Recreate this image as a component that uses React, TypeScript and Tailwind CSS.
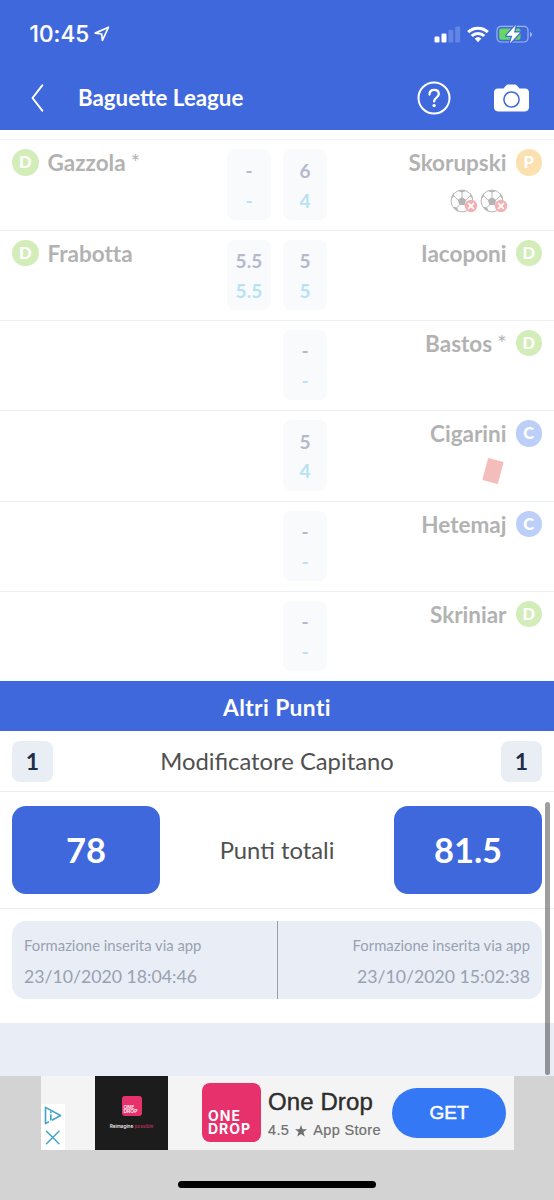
import type { ReactNode } from "react";

type Role = "D" | "P" | "C";
type Player = { name: string; starred?: boolean; role: Role; vote: string; total: string; extra?: "goals" | "red" };
type Match = { home?: Player; away: Player };

const matches: Match[] = [
  {
    home: { name: "Gazzola", starred: true, role: "D", vote: "-", total: "-" },
    away: { name: "Skorupski", role: "P", vote: "6", total: "4", extra: "goals" },
  },
  {
    home: { name: "Frabotta", role: "D", vote: "5.5", total: "5.5" },
    away: { name: "Iacoponi", role: "D", vote: "5", total: "5" },
  },
  { away: { name: "Bastos", starred: true, role: "D", vote: "-", total: "-" } },
  { away: { name: "Cigarini", role: "C", vote: "5", total: "4", extra: "red" } },
  { away: { name: "Hetemaj", role: "C", vote: "-", total: "-" } },
  { away: { name: "Skriniar", role: "D", vote: "-", total: "-" } },
];

const roleColors: Record<Role, string> = {
  D: "bg-[#d3edb9]",
  P: "bg-[#fbe0b0]",
  C: "bg-[#bccff8]",
};

function RoleBadge({ role }: { role: Role }) {
  return (
    <span
      className={`flex size-[26.5px] shrink-0 items-center justify-center rounded-full text-[16.5px] leading-none font-black text-white ${roleColors[role]}`}
    >
      {role}
    </span>
  );
}

function ScorePill({ player }: { player: Player }) {
  return (
    <div className="flex h-[70.5px] w-[44px] flex-col items-center rounded-[8px] bg-[#f9fafc] pt-[6.5px] text-[19px] leading-[29.7px] font-bold tracking-[0.1px]">
      <span className="text-[#b5b9cc]">{player.vote}</span>
      <span className="text-[#b7e2f5]">{player.total}</span>
    </div>
  );
}

function ConcededGoal() {
  return (
    <svg width="28" height="25" viewBox="0 0 28 25">
      <circle cx="12" cy="12" r="10.9" fill="#fdfdfd" stroke="#b8b8b8" strokeWidth="1" />
      <g fill="#b4b4b4">
        <path d="M12 8l4.200 3-1.600 4.900H9.400L7.800 11z" />
        <path d="M8.200 1.900L12 3.700l3.800-1.800A11 11 0 0 0 8.200 1.900z" />
        <path d="M1.200 10.200l3-3.100L4 3.800a11 11 0 0 0-2.800 6.400z" />
        <path d="M22.800 10.200l-3-3.100.2-3.300a11 11 0 0 1 2.800 6.400z" />
        <path d="M3 18l4.100.3 1.500 4.100A11 11 0 0 1 3 18z" />
      </g>
      <path
        d="M12 8V3.700M7.800 11L4.200 7.100M16.200 11l3.600-3.900M9.400 15.900l-2.300 2.400M14.600 15.900l2.300 2.400"
        fill="none"
        stroke="#b8b8b8"
        strokeWidth="1"
      />
      <circle cx="21" cy="17" r="6.200" fill="#f2b1b3" />
      <path d="M18.600 14.600l4.800 4.800M23.400 14.600l-4.800 4.800" stroke="#fff" strokeWidth="1.700" strokeLinecap="round" />
    </svg>
  );
}

function RedCard() {
  return (
    <svg width="24" height="30" viewBox="0 0 24 30">
      <rect x="4" y="3.500" width="16" height="23" rx="1.200" fill="#f4bcbb" transform="rotate(15 12 15)" />
    </svg>
  );
}

function PlayerName({ player }: { player: Player }) {
  return (
    <span className="flex text-[22.5px] leading-[28px] font-bold whitespace-nowrap text-[#b2b2b2] [font-variant-ligatures:none]">
      {player.name}
      {player.starred && <span className="ml-[5px] text-[22px] leading-[25px] font-normal">*</span>}
    </span>
  );
}

function MatchRow({ home, away }: Match) {
  return (
    <div className="flex h-[90.3px] border-t-[1.5px] border-[#edf1f7] px-3 pt-[9px]">
      <div className="flex flex-1 items-start gap-[9px]">
        {home && (
          <>
            <RoleBadge role={home.role} />
            <PlayerName player={home} />
          </>
        )}
      </div>
      <div className="flex w-[100px] justify-end gap-3">
        {home && <ScorePill player={home} />}
        <ScorePill player={away} />
      </div>
      <div className="flex flex-1 flex-col items-end">
        <div className="flex items-start gap-[9px]">
          <PlayerName player={away} />
          <RoleBadge role={away.role} />
        </div>
        {away.extra === "goals" && (
          <div className="mt-[12px] mr-[34.500px] flex gap-[2px]">
            <ConcededGoal />
            <ConcededGoal />
          </div>
        )}
        {away.extra === "red" && (
          <div className="mt-[8px] mr-[37px]">
            <RedCard />
          </div>
        )}
      </div>
    </div>
  );
}

function StatusBar() {
  return (
    <div className="flex h-[68px] items-center justify-between pr-[21px] pl-[29.500px]">
      <div className="flex items-center gap-[5px]">
        <span className="font-['Inter'] text-[22.500px] leading-none font-medium tracking-[0.100px] [-webkit-text-stroke:0.2px_#fff]">10:45</span>
        <svg width="16" height="16" viewBox="0 0 16 16" fill="none" stroke="#fff" strokeWidth="1.700" strokeLinejoin="round">
          <path d="M14.500 1.200L1.200 7.100l6.500.9.700 6.500z" />
        </svg>
      </div>
      <div className="flex items-center gap-[6px]">
        <svg width="27" height="17" viewBox="0 0 27 17" fill="#fff">
          <rect x="0.500" y="10.500" width="5" height="6" rx="1.200" />
          <rect x="7.500" y="7.500" width="5" height="9" rx="1.200" />
          <rect x="14.300" y="3.800" width="5" height="12.700" rx="1.200" opacity=".2" />
          <rect x="21.200" y="0.500" width="5" height="16" rx="1.200" opacity=".2" />
        </svg>
        <svg width="22" height="17" viewBox="0 0 22 17" fill="none" stroke="#fff" strokeWidth="3.100">
          <path d="M1.200 6.200a14 14 0 0 1 19.600 0" />
          <path d="M4.700 10a9 9 0 0 1 12.600 0" />
          <path d="M7.600 12.600a5 5 0 0 1 6.800 0L11 16.200z" fill="#fff" stroke="none" />
        </svg>
        <svg className="ml-px" width="37" height="20" viewBox="0 0 37 20">
          <rect x="1" y="2.300" width="31" height="15.700" rx="4" fill="none" stroke="#9fb4ed" strokeWidth="1.200" />
          <path d="M34 8v5c2.800-1 2.800-4 0-5z" fill="#9fb4ed" />
          <rect x="3.200" y="4.500" width="21.300" height="11.300" rx="2" fill="#65d764" />
          <path
            d="M19.800 1L10.200 11.700h6L14 19.300 24 8.400h-6z"
            fill="#fff"
            stroke="#3e68dc"
            strokeWidth="2.400"
            strokeLinejoin="round"
            paintOrder="stroke"
          />
        </svg>
      </div>
    </div>
  );
}

function Header() {
  return (
    <header className="h-[130px] shrink-0 bg-[#3e68dc] text-white">
      <StatusBar />
      <div className="flex h-[59px] items-center pr-[24px] pl-[31px]">
        <svg width="14" height="30" viewBox="0 0 14 30" fill="none" stroke="#fff" strokeWidth="2" strokeLinecap="round" strokeLinejoin="round">
          <path d="M11.300 2.300L1.500 15l9.800 12.700" />
        </svg>
        <h1 className="ml-[33px] flex-1 pt-[1px] text-[22.300px] leading-none font-bold">Baguette League</h1>
        <svg width="34" height="34" viewBox="0 0 34 34" fill="none" stroke="#fff" strokeWidth="2">
          <circle cx="17" cy="17" r="15.500" />
          <path d="M12.500 13.600c0-3 2-4.700 4.700-4.700 2.700 0 4.600 1.600 4.600 4.100 0 3.800-4.700 3.500-4.700 7.400" strokeWidth="2.300" strokeLinecap="round" />
          <circle cx="17.100" cy="24.600" r="1.700" fill="#fff" stroke="none" />
        </svg>
        <svg className="ml-[42px]" width="37" height="30" viewBox="0 0 37 30">
          <path
            d="M5 5.500h5.500l2.600-3.100c.6-.7 1.200-.9 2-.9h6.800c.8 0 1.400.2 2 .9l2.600 3.100H32c2.400 0 4 1.500 4 3.800v15.200c0 2.300-1.600 3.900-4 3.900H5c-2.400 0-4-1.600-4-3.900V9.300c0-2.300 1.600-3.800 4-3.800z"
            fill="#fff"
          />
          <circle cx="18.500" cy="16.500" r="7.600" fill="none" stroke="#3e68dc" strokeWidth="1.500" />
        </svg>
      </div>
    </header>
  );
}

function CaptainBadge() {
  return (
    <span className="flex size-[41px] items-center justify-center rounded-[8px] bg-[#e9eef5] text-[23px] leading-none font-bold text-[#1f2d4d]">
      1
    </span>
  );
}

function TotalBox({ children }: { children: ReactNode }) {
  return (
    <div className="flex h-[88.500px] w-[148px] items-center justify-center rounded-[14px] bg-[#3e68dc] pt-[1px] text-[34.500px] leading-none font-bold text-white">
      {children}
    </div>
  );
}

function OneDropLogo({ small = false }: { small?: boolean }) {
  return small ? (
    <div className="flex size-[20px] flex-col justify-end rounded-[3px] bg-[#e6316d] pb-[3px] pl-[2px] font-['Inter'] text-[5px] leading-[4.200px] font-semibold text-white">
      <span>ONE</span>
      <span>DROP</span>
    </div>
  ) : (
    <div className="flex size-[59px] flex-col justify-end rounded-[8px] bg-[#e6316d] pb-[7px] pl-[6px] font-['Inter'] text-[14px] leading-[13px] font-bold tracking-[1px] text-white">
      <span>ONE</span>
      <span>DROP</span>
    </div>
  );
}

function AdBanner() {
  return (
    <div className="ml-[41px] flex h-[73.500px] w-[472.500px] bg-[#f4f4f4] font-['Liberation_Sans',sans-serif]">
      <div className="mt-auto flex h-[46px] w-[24px] flex-col items-center justify-between bg-white py-[2px]">
        <svg width="18" height="19" viewBox="0 0 18 19" fill="none" stroke="#42a5c8" strokeWidth="1.600" strokeLinejoin="round">
          <path d="M5 15.600l-3.500 2V1.400L16.500 9.500 8 14.200" />
          <path d="M6.800 8.200v6.300M6.800 5.200v1.700" strokeWidth="1.700" />
        </svg>
        <svg width="18" height="18" viewBox="0 0 18 18" fill="none" stroke="#42a5c8" strokeWidth="1.500" strokeLinecap="round">
          <path d="M2.500 1.200l12.500 12.500M15 1.200L2.500 13.700" />
        </svg>
      </div>
      <div className="ml-[30px] flex w-[73px] flex-col items-center bg-[#1c1c1c] pt-[20px]">
        <OneDropLogo small />
        <p className="mt-[7px] font-['Inter'] text-[4.700px] leading-[6px] font-medium whitespace-nowrap text-white">
          Reimagine <span className="text-[#c02d5e]">possible</span>
        </p>
      </div>
      <div className="mt-[7px] ml-[34px]">
        <OneDropLogo />
      </div>
      <div className="ml-[7px] w-[124px] pt-[12px] whitespace-nowrap">
        <p className="text-[24px] leading-[27px] tracking-[0.100px] text-[#2d2d2d] [-webkit-text-stroke:0.4px_#2d2d2d]">One Drop</p>
        <p className="mt-[7px] flex items-center text-[14.500px] leading-[17px] tracking-[0.350px] text-[#6f6f6f] [-webkit-text-stroke:0.2px_#6f6f6f]">
          4.5
          <svg className="mx-[6px]" width="12" height="12" viewBox="0 0 24 24" fill="#6f6f6f">
            <path d="M12 0l3 8.700h9l-7.200 5.500 2.700 9L12 17.800 4.500 23.200l2.700-9L0 8.700h9z" />
          </svg>
          App Store
        </p>
      </div>
      <button className="mt-[11.500px] flex h-[50.500px] w-[114px] items-center justify-center rounded-full bg-[#3478f6] text-[19px] leading-none text-white [-webkit-text-stroke:0.5px_#fff]">
        GET
      </button>
    </div>
  );
}

export default function App() {
  return (
    <div className="relative flex h-[1200px] w-[554px] flex-col overflow-hidden bg-white font-['Lato',sans-serif]">
      <Header />
      <main className="h-[946px] shrink-0 bg-[#e9eef6]">
        <div className="h-[892.500px] bg-white pt-[9.400px]">
          {matches.map((match) => (
            <MatchRow key={match.away.name} {...match} />
          ))}
          <h2 className="flex h-[50px] items-center justify-center bg-[#3e68dc] pt-[2px] text-[22.800px] leading-none font-bold tracking-[0.400px] text-white">
            Altri Punti
          </h2>
          <div className="flex h-[60.700px] items-center justify-between border-b border-[#e7edf3] px-3">
            <CaptainBadge />
            <span className="pt-[2px] text-[23.800px] leading-none text-[#505050]">Modificatore Capitano</span>
            <CaptainBadge />
          </div>
          <div className="flex h-[117px] items-center justify-between border-b-[1.500px] border-[#ecf0f5] px-3">
            <TotalBox>78</TotalBox>
            <span className="pt-[2px] text-[23.800px] leading-none text-[#505050]">Punti totali</span>
            <TotalBox>81.5</TotalBox>
          </div>
          <div className="mx-3 mt-[12.200px] flex h-[78px] rounded-[14px] bg-[#e9eef6] text-[#98a1b1]">
            <div className="w-[265.500px] border-r-[1.500px] border-[#979fae] px-3 pt-[14px]">
              <p className="text-[14.850px] leading-[20px]">Formazione inserita via app</p>
              <p className="mt-[11px] text-[17.700px] leading-[22px]">23/10/2020 18:04:46</p>
            </div>
            <div className="flex-1 px-3 pt-[14px] text-right">
              <p className="text-[14.850px] leading-[20px]">Formazione inserita via app</p>
              <p className="mt-[11px] text-[17.700px] leading-[22px]">23/10/2020 15:02:38</p>
            </div>
          </div>
        </div>
      </main>
      <footer className="h-[124px] shrink-0 bg-[#d3d3d3]">
        <AdBanner />
        <div className="mx-auto mt-[31px] h-[7.500px] w-[198px] rounded-full bg-black" />
      </footer>
      <div className="absolute top-[802px] right-[4.500px] h-[273px] w-[4.500px] rounded-full bg-black/38" />
    </div>
  );
}
